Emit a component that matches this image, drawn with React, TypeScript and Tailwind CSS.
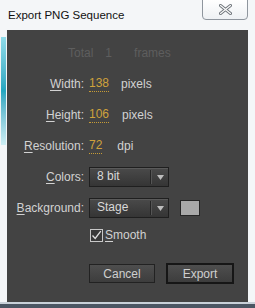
import React from "react";

const font = { fontFamily: '"Liberation Sans", Arial, sans-serif' };

function U({ c, rest }: { c: string; rest: string }) {
  return (
    <span>
      <span className="underline underline-offset-2 decoration-1">{c}</span>
      {rest}
    </span>
  );
}

function Val({ v }: { v: string }) {
  return (
    <span className="text-[#cfa23c] border-b border-dotted border-[#c79c36] leading-[13px] pb-[1px]">{v}</span>
  );
}

function Row({ label, children }: { label: React.ReactNode; children: React.ReactNode }) {
  return (
    <div className="flex items-center h-[20px]">
      <div className="w-[77px] text-right text-[#d2d2d2]">{label}</div>
      <div className="ml-[5px] flex items-center">{children}</div>
    </div>
  );
}

function Select({ text }: { text: string }) {
  return (
    <div className="w-[80px] h-[20px] flex border border-[#1f1f1f] bg-gradient-to-b from-[#4a4a4a] to-[#353535] shadow-[inset_0_1px_0_#5a5a5a]">
      <div className="flex-1 pl-[7px] text-[#d8d8d8] leading-[17px]">{text}</div>
      <div className="w-px bg-[#262626] my-[2px]" />
      <div className="w-px bg-[#555] my-[2px]" />
      <div className="w-[16px] flex items-center justify-center">
        <svg width="7" height="5" viewBox="0 0 7 5">
          <path d="M0 0H7L3.5 5Z" fill="#bdbdbd" />
        </svg>
      </div>
    </div>
  );
}

export default function App() {
  return (
    <div className="w-[255px] h-[308px] bg-[#f4f6f8] flex flex-col overflow-hidden text-[12px]" style={font}>
      <div className="h-[30px] flex justify-between shrink-0">
        <div className="pl-[8px] pt-[9px] text-[11.5px] text-[#111] leading-[13px]">Export PNG Sequence</div>
        <div className="w-[46px] h-[21px] mt-[-1px] mr-[7px] border border-[#8f969e] rounded-b-[4px] bg-gradient-to-b from-white to-[#eef1f4] flex items-center justify-center">
          <svg width="13" height="11" viewBox="0 0 13 11">
            <path d="M1.5 1.5L11.5 9.5M11.5 1.5L1.5 9.5" stroke="#6e747a" strokeWidth="3" strokeLinecap="round" />
            <path d="M1.5 1.5L11.5 9.5M11.5 1.5L1.5 9.5" stroke="#fbfbfb" strokeWidth="1.2" strokeLinecap="round" />
          </svg>
        </div>
      </div>
      <div className="flex flex-1">
        <div className="w-[7px] flex flex-col">
          <div className="ml-[1px] mt-[7px] w-[5px] h-[108px] bg-gradient-to-b from-[#8fdcea] via-[#22a6c0] to-[#cdeef4]" />
        </div>
        <div className="flex-1 bg-[#434343] flex flex-col pt-[13px]">
          <div className="h-[20px] flex items-center text-[#5e5e5e]">
            <span className="ml-[61px]">Total</span>
            <span className="ml-[12px]">1</span>
            <span className="ml-[22px]">frames</span>
          </div>
          <div className="flex flex-col gap-[11px] mt-[11px]">
            <Row label={<U c="W" rest="idth:" />}>
              <Val v="138" />
              <span className="ml-[12px] text-[#d2d2d2]">pixels</span>
            </Row>
            <Row label={<U c="H" rest="eight:" />}>
              <Val v="106" />
              <span className="ml-[13px] text-[#d2d2d2]">pixels</span>
            </Row>
            <Row label={<U c="R" rest="esolution:" />}>
              <Val v="72" />
              <span className="ml-[15px] text-[#d2d2d2]">dpi</span>
            </Row>
            <Row label={<U c="C" rest="olors:" />}>
              <Select text="8 bit" />
            </Row>
            <Row label={<U c="B" rest="ackground:" />}>
              <Select text="Stage" />
              <div className="ml-[11px] w-[20px] h-[16px] bg-[#a9a9a9] border border-[#262626]" />
            </Row>
          </div>
          <div className="flex items-center h-[18px] mt-[8px] ml-[83px]">
            <div className="w-[13px] h-[13px] border border-[#c8c8c8] bg-[#3a3a3a] flex items-center justify-center">
              <svg width="11" height="11" viewBox="0 0 11 11">
                <path d="M1.5 5.5L4.2 8.5L9.8 1.2" stroke="#e2e2e2" strokeWidth="1.3" fill="none" />
              </svg>
            </div>
            <span className="ml-[2px] text-[#d2d2d2]">
              <U c="S" rest="mooth" />
            </span>
          </div>
          <div className="flex mt-[19px] ml-[82px] items-center">
            <div className="w-[66px] h-[19px] border border-[#222] bg-gradient-to-b from-[#4e4e4e] to-[#3d3d3d] text-[#cfcfcf] flex items-center justify-center">Cancel</div>
            <div className="ml-[11px] w-[68px] h-[21px] border-2 border-[#161616] bg-gradient-to-b from-[#4e4e4e] to-[#3d3d3d] text-[#cfcfcf] flex items-center justify-center">Export</div>
          </div>
        </div>
        <div className="w-[7px]" />
      </div>
      <div className="h-[2px] shrink-0 bg-[#c9d1d9]" />
      <div className="h-[4px] shrink-0 bg-[#4b5663]" />
    </div>
  );
}
